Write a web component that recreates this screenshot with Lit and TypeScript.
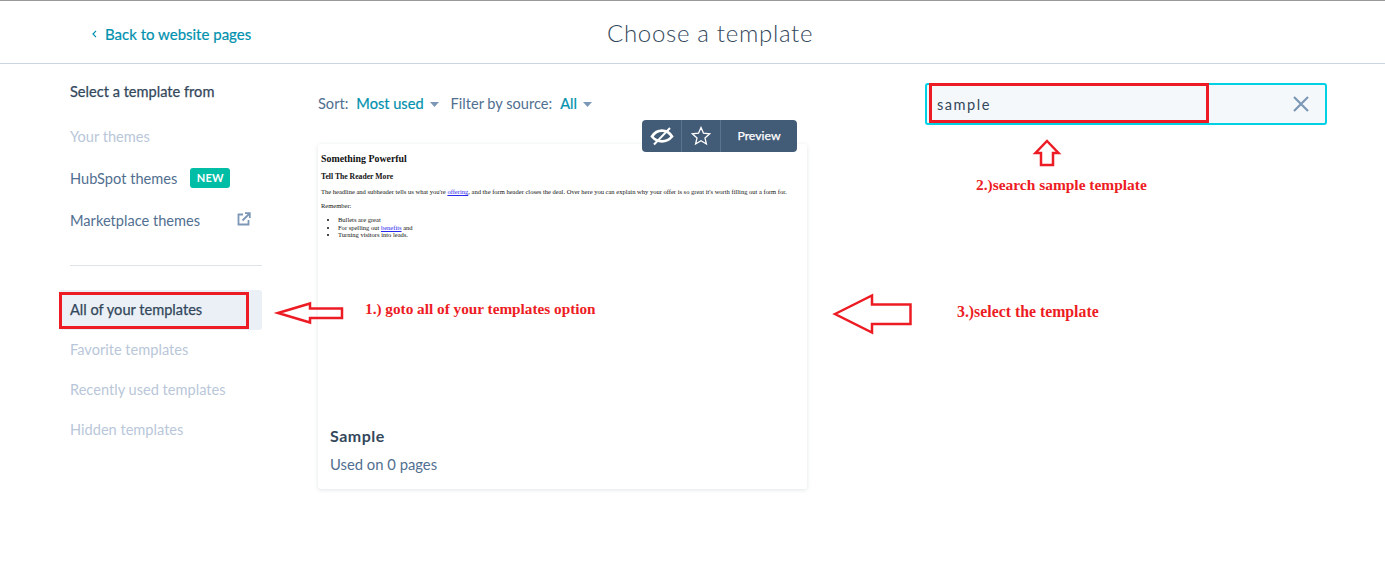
import {LitElement, html, css} from 'lit';
import {customElement} from 'lit/decorators.js';

@customElement('app-root')
export class AppRoot extends LitElement {
    static override styles = css`
        :host {
            display: block;
            position: relative;
            height: 567px;
            overflow: hidden;
            background: #fff;
            font-family: Lato, "Noto Sans", sans-serif;
            font-size: 14.6px;
            color: #33475b;
        }

        .header {
            height: 62px;
            border-top: 1px solid #999;
            border-bottom: 1px solid #cbd6e2;
            display: flex;
            align-items: center;
            padding-left: 92px;
        }

        .back {
            width: 515px;
            display: flex;
            align-items: center;
            gap: 8px;
            padding-top: 4px;
            color: #0091ae;
            font-size: 15px;
            -webkit-text-stroke: 0.2px #0091ae;
        }

        .title {
            font-size: 24px;
            font-weight: 300;
            letter-spacing: 0.7px;
            color: #33475b;
        }

        .body {
            display: flex;
            padding-left: 59px;
        }

        .side {
            width: 203px;
            padding-top: 18px;
        }

        .side-head {
            padding-left: 11px;
            height: 20px;
            line-height: 20px;
            -webkit-text-stroke: 0.25px #33475b;
        }

        .item {
            height: 40px;
            padding: 0 0 2px 11px;
            box-sizing: border-box;
            display: flex;
            align-items: center;
            color: #516f90;
        }

        .item.off {
            color: #b9c7d9;
        }

        .item.on {
            background: #eaf0f6;
            border-radius: 3px;
            color: #33475b;
            -webkit-text-stroke: 0.25px #33475b;
        }

        .side-top {
            margin-top: 15px;
            margin-bottom: 24px;
            display: flex;
            flex-direction: column;
            gap: 2px;
        }

        .rule {
            margin-left: 11px;
            border-top: 1px solid #dfe3eb;
            margin-bottom: 24px;
        }

        .badge {
            margin-left: 13px;
            background: #00bda5;
            color: #fff;
            border-radius: 3px;
            width: 40px;
            height: 20px;
            line-height: 20px;
            text-align: center;
            font-size: 11px;
            font-weight: 700;
            letter-spacing: 0.3px;
        }

        .ext {
            margin-left: auto;
            margin-right: 11px;
            margin-top: -2px;
            display: flex;
        }

        .main {
            margin-left: 56px;
            width: 489px;
        }

        .filters {
            height: 56px;
            padding-top: 30px;
            box-sizing: border-box;
            display: flex;
            align-items: flex-start;
            color: #516f90;
            line-height: 20px;
            position: relative;
        }

        .filters .val {
            color: #0091ae;
            margin-left: 8px;
            -webkit-text-stroke: 0.2px #0091ae;
        }

        .caret {
            margin-left: 6px;
            margin-right: 12px;
            margin-top: 8px;
        }

        .tools {
            position: absolute;
            left: 324px;
            top: 56px;
            width: 155px;
            height: 32px;
            background: #425b76;
            border-radius: 4px;
            display: flex;
            color: #fff;
            font-size: 12.3px;
            -webkit-text-stroke: 0.25px #fff;
            z-index: 1;
        }

        .tool {
            display: flex;
            align-items: center;
            justify-content: center;
            width: 39px;
            border-right: 1px solid #5a7391;
            box-sizing: border-box;
        }

        .tool.first {
            width: 40px;
        }

        .tool.wide {
            flex: 1;
            border: 0;
        }

        .card {
            margin-top: 24px;
            height: 345px;
            border-radius: 3px;
            box-shadow: 0 1px 4px rgba(45, 62, 80, 0.14);
        }

        .doc {
            height: 264px;
            padding: 9px 3px 0;
            box-sizing: border-box;
            font-family: "Liberation Serif", serif;
            color: #111;
            font-size: 6.53px;
            line-height: 7.6px;
        }

        .doc h1 {
            font-size: 9.9px;
            line-height: 12px;
            margin: 0 0 7px;
        }

        .doc h2 {
            font-size: 7.7px;
            line-height: 9px;
            margin: 0 0 7px;
        }

        .doc p {
            margin: 0 0 6.500px;
        }

        .doc ul {
            margin: 0;
            padding-left: 17px;
        }

        .doc a {
            color: #2a2aee;
            text-decoration: underline;
        }

        .info {
            padding: 18px 12px 0;
        }

        .name {
            font-size: 16px;
            line-height: 20px;
            font-weight: 700;
            letter-spacing: 0.5px;
            color: #33475b;
        }

        .used {
            margin-top: 8px;
            line-height: 20px;
            color: #516f90;
            font-size: 14.8px;
        }

        .search {
            margin-left: 118px;
            margin-top: 19px;
            width: 402px;
            height: 42px;
            box-sizing: border-box;
            border: 2px solid #00d0e4;
            border-radius: 3px;
            background: #f5f8fa;
            display: flex;
            align-items: center;
            justify-content: space-between;
            padding: 0 16px 0 10px;
            letter-spacing: 1.5px;
        }

        .marks {
            position: absolute;
            left: 0;
            top: 0;
            pointer-events: none;
            z-index: 2;
        }

        .note {
            position: absolute;
            font-family: "Liberation Serif", serif;
            font-weight: 700;
            line-height: 16px;
            color: #ed1c24;
            white-space: nowrap;
            z-index: 2;
        }

        .n1 {
            left: 365px;
            top: 301px;
            font-size: 15.25px;
        }

        .n2 {
            left: 976px;
            top: 177px;
            font-size: 15.45px;
        }

        .n3 {
            left: 957px;
            top: 304px;
            font-size: 15.8px;
        }
    `;

    override render() {
        return html`
            <div class="header">
                <div class="back">
                    <svg width="5" height="8" viewBox="0 0 5 8"><path d="M4 .8 1 4l3 3.2" fill="none" stroke="#0091ae" stroke-width="1.2"/></svg>
                    Back to website pages
                </div>
                <div class="title">Choose a template</div>
            </div>
            <div class="body">
                <div class="side">
                    <div class="side-head">Select a template from</div>
                    <div class="side-top">
                        <div class="item off">Your themes</div>
                        <div class="item">HubSpot themes <span class="badge">NEW</span></div>
                        <div class="item">Marketplace themes
                            <span class="ext">
                                <svg width="14" height="14" viewBox="0 0 14 14" fill="none" stroke="#7c98b6" stroke-width="1.8">
                                    <path d="M6 2.500H1.500v10h10V8"/>
                                    <path d="M5.500 8.500 12 2M8 1.200h4.800V6"/>
                                </svg>
                            </span>
                        </div>
                    </div>
                    <div class="rule"></div>
                    <div class="item on">All of your templates</div>
                    <div class="item off">Favorite templates</div>
                    <div class="item off">Recently used templates</div>
                    <div class="item off">Hidden templates</div>
                </div>
                <div class="main">
                    <div class="filters">
                        Sort: <span class="val">Most used</span>
                        <svg class="caret" width="9" height="5" viewBox="0 0 9 5"><path d="M0 0h9L4.500 5z" fill="#7c98b6"/></svg>
                        Filter by source: <span class="val">All</span>
                        <svg class="caret" width="9" height="5" viewBox="0 0 9 5"><path d="M0 0h9L4.500 5z" fill="#7c98b6"/></svg>
                        <div class="tools">
                            <div class="tool first">
                                <svg width="24" height="20" viewBox="0 0 24 20" fill="none" stroke="#fff" stroke-width="2.700">
                                    <path d="M2 10.500c2.500-3.800 6-5.800 10-5.800s7.500 2 10 5.800c-2.500 3-6 4.800-10 4.800s-7.500-1.800-10-4.800z"/>
                                    <path d="M4 18.500 20 2" stroke-width="2"/>
                                </svg>
                            </div>
                            <div class="tool">
                                <svg width="20" height="20" viewBox="0 0 20 20" fill="none" stroke="#fff" stroke-width="1.300">
                                    <path d="M10 1.500l2.500 5.700 6.200.6-4.700 4.100 1.400 6.100-5.400-3.200-5.400 3.200 1.400-6.100L1.300 7.800l6.200-.6z"/>
                                </svg>
                            </div>
                            <div class="tool wide">Preview</div>
                        </div>
                    </div>
                    <div class="card">
                        <div class="doc">
                            <h1>Something Powerful</h1>
                            <h2>Tell The Reader More</h2>
                            <p>The headline and subheader tells us what you're <a>offering</a>, and the form header closes the deal. Over here you can explain why your offer is so great it's worth filling out a form for.</p>
                            <p>Remember:</p>
                            <ul>
                                <li>Bullets are great</li>
                                <li>For spelling out <a>benefits</a> and</li>
                                <li>Turning visitors into leads.</li>
                            </ul>
                        </div>
                        <div class="info">
                            <div class="name">Sample</div>
                            <div class="used">Used on 0 pages</div>
                        </div>
                    </div>
                </div>
                <div class="search">
                    sample
                    <svg width="16" height="16" viewBox="0 0 16 16"><path d="M1 1l14 14M15 1 1 15" stroke="#7c98b6" stroke-width="2.200"/></svg>
                </div>
            </div>

            <svg class="marks" width="1385" height="567" fill="none" stroke="#ed1c24">
                <rect x="60.500" y="293.500" width="187" height="34" stroke-width="3"/>
                <rect x="930.500" y="84.500" width="277" height="37" stroke-width="3"/>
                <path stroke-width="2.500" d="M278 313 310 303.500V308.500H342V318H310V322.500Z"/>
                <path stroke-width="2.500" d="M835 314 872 295.500V304.500H910.500V324H872V332.500Z"/>
                <path stroke-width="2.500" d="M1047 141 1058.500 153H1053V165H1041V153H1035.500Z"/>
            </svg>
            <div class="note n1">1.) goto all of your templates option</div>
            <div class="note n2">2.)search sample template</div>
            <div class="note n3">3.)select the template</div>
        `;
    }
}
